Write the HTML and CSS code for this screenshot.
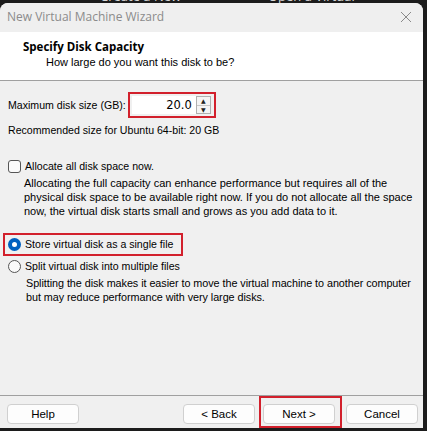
FILE: index.html
```html
<!DOCTYPE html>
<html lang="en">
<head>
  <meta charset="UTF-8">
  <title>New Virtual Machine Wizard</title>
  <link rel="stylesheet" href="styles.css">
</head>
<body>

  <div class="backdrop">
    <span class="ghost ghost-left">Create a New</span>
    <span class="ghost ghost-right">Open a Virtual</span>
  </div>

  <div class="window">
    <div class="titlebar">
      <span class="title">New Virtual Machine Wizard</span>
      <svg class="close" width="12" height="12" viewBox="0 0 12 12">
        <path d="M1 1 L11 11 M11 1 L1 11" stroke="#8a8a8a" stroke-width="1"/>
      </svg>
    </div>

    <div class="header">
      <div class="heading">Specify Disk Capacity</div>
      <div class="subheading">How large do you want this disk to be?</div>
    </div>

    <div class="content">
      <div class="size-row">
        <span>Maximum disk size (GB):</span>
        <div class="highlight spin-wrap">
          <div class="spinbox">
            <span class="value">20.0</span>
            <div class="arrows">
              <span class="arrow">&#9650;</span>
              <span class="arrow">&#9660;</span>
            </div>
          </div>
        </div>
      </div>
      <div class="note">Recommended size for Ubuntu 64-bit: 20 GB</div>

      <label class="option option-check">
        <span class="checkbox"></span>
        Allocate all disk space now.
      </label>
      <p class="desc">Allocating the full capacity can enhance performance but requires all of the physical disk space to be available right now. If you do not allocate all the space now, the virtual disk starts small and grows as you add data to it.</p>

      <div class="highlight radio-wrap">
        <label class="option">
          <span class="radio checked"></span>
          Store virtual disk as a single file
        </label>
      </div>
      <label class="option option-split">
        <span class="radio"></span>
        Split virtual disk into multiple files
      </label>
      <p class="desc desc-split">Splitting the disk makes it easier to move the virtual machine to another computer but may reduce performance with very large disks.</p>
    </div>

    <div class="footer">
      <button>Help</button>
      <div class="nav">
        <button>&lt; Back</button>
        <div class="highlight next-wrap"><button>Next &gt;</button></div>
        <button>Cancel</button>
      </div>
    </div>
  </div>

</body>
</html>
```

FILE: styles.css
```css
body {
  margin: 0;
  background: #1c1c1c;
  font-family: 'Liberation Sans', Arial, sans-serif;
  font-size: 10.6px;
  color: #000;
  overflow: hidden;
}

.backdrop {
  height: 3px;
  position: relative;
  overflow: hidden;
}

.ghost {
  position: absolute;
  top: -10px;
  color: #d8d8d8;
  font-family: 'Open Sans', sans-serif;
  font-size: 13px;
  line-height: 13px;
}

.ghost-left {
  left: 100px;
}

.ghost-right {
  left: 268px;
}

.window {
  width: 423px;
  height: 425px;
  background: #f0f0f0;
  border-radius: 8px 8px 0 0;
  display: flex;
  flex-direction: column;
  overflow: hidden;
}

.titlebar {
  height: 29px;
  background: #efefef;
  display: flex;
  align-items: center;
  justify-content: space-between;
  padding: 0 11px 0 7px;
}

.title {
  font-family: 'Open Sans', sans-serif;
  font-size: 12px;
  color: #8b8b8b;
  margin-top: -2px;
}

.close {
  margin-top: -2px;
}

.header {
  background: #fff;
  height: 49px;
  border-bottom: 1px solid #a0a0a0;
  padding: 8px 0 0 23px;
  box-sizing: border-box;
}

.heading {
  font-family: 'Open Sans', sans-serif;
  font-weight: bold;
  font-size: 11.5px;
  line-height: 13px;
}

.subheading {
  padding-left: 23px;
  margin-top: 3px;
  line-height: 13px;
  font-size: 11px;
}

.content {
  flex: 1;
  padding: 11px 2px 0 8px;
  border-bottom: 1px solid #a0a0a0;
}

.size-row {
  display: flex;
  align-items: center;
  gap: 2px;
}

.highlight {
  border: 2px solid #d2202c;
}

.spin-wrap {
  padding: 2px 3px 2px 2px;
}

.spinbox {
  width: 79px;
  height: 18px;
  background: #fff;
  display: flex;
  align-items: center;
  justify-content: flex-end;
  font-family: 'DejaVu Sans', sans-serif;
  font-size: 11.5px;
}

.value {
  margin-right: 4px;
}

.arrows {
  display: flex;
  flex-direction: column;
  border: 1px solid #b0b0b0;
  background: #f4f4f4;
  width: 15px;
  height: 18px;
  box-sizing: border-box;
}

.arrow {
  flex: 1;
  font-size: 6px;
  line-height: 8px;
  text-align: center;
  color: #222;
}

.arrow + .arrow {
  border-top: 1px solid #c8c8c8;
}

.note {
  margin-top: 6px;
  line-height: 13px;
}

.option {
  display: flex;
  align-items: center;
  gap: 4px;
  line-height: 13px;
}

.option-check {
  margin-top: 23px;
}

.checkbox {
  width: 11px;
  height: 11px;
  border: 1px solid #555;
  border-radius: 3px;
  background: #fafafa;
}

.desc {
  margin: 3px 0 0 16px;
  line-height: 14px;
  font-size: 11px;
}

.radio-wrap {
  display: inline-block;
  margin: 15px 0 0 -5px;
  padding: 3px 8px 3px 3px;
}

.radio {
  width: 11px;
  height: 11px;
  border: 1px solid #555;
  border-radius: 50%;
  background: #fafafa;
  box-sizing: content-box;
}

.radio.checked {
  width: 5px;
  height: 5px;
  border: 4px solid #0060c0;
  background: #fff;
}

.option-split {
  margin-top: 4px;
}

.desc-split {
  margin-left: 18px;
  font-size: 10.8px;
  letter-spacing: -0.05px;
}

.footer {
  height: 32px;
  box-sizing: border-box;
  display: flex;
  justify-content: space-between;
  align-items: flex-start;
  padding: 8px 5px 0 7px;
}

.nav {
  display: flex;
  align-items: flex-start;
  gap: 4px;
}

button {
  width: 72px;
  height: 20px;
  background: #fdfdfd;
  border: 1px solid #d0d0d0;
  border-radius: 4px;
  font-family: 'Liberation Sans', Arial, sans-serif;
  font-size: 11.5px;
  color: #000;
  padding: 0;
}

.next-wrap {
  margin-top: -8px;
  padding: 6px 5px 2px 2px;
}
```
